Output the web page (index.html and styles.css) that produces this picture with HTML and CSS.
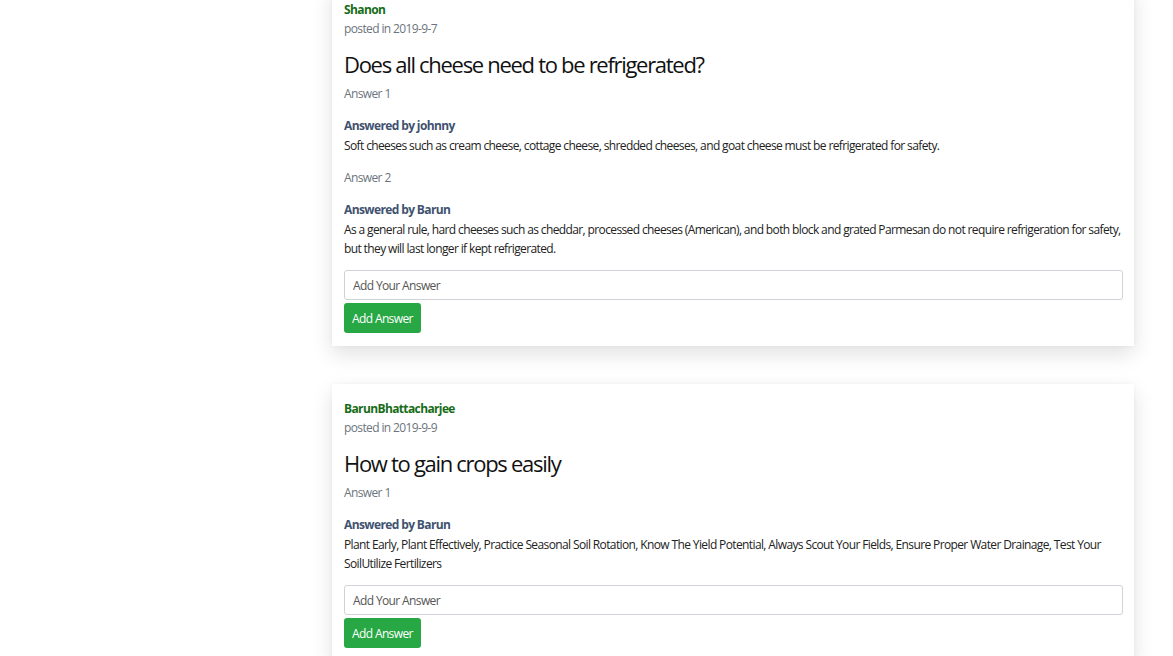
FILE: index.html
```html
<!DOCTYPE html>
<html>
<head>
<meta charset="utf-8">
<link rel="stylesheet" href="styles.css">
</head>
<body>
<main class="page">
  <div class="feed">
    <article class="card">
      <div class="author">Shanon</div>
      <div class="date">posted in 2019-9-7</div>
      <h2 class="question">Does all cheese need to be refrigerated?</h2>
      <div class="answer-label">Answer 1</div>
      <div class="answer">
        <div class="answered-by">Answered by johnny</div>
        <p class="answer-text">Soft cheeses such as cream cheese, cottage cheese, shredded cheeses, and goat cheese must be refrigerated for safety.</p>
      </div>
      <div class="answer-label">Answer 2</div>
      <div class="answer">
        <div class="answered-by">Answered by Barun</div>
        <p class="answer-text">As a general rule, hard cheeses such as cheddar, processed cheeses (American), and both block and grated Parmesan do not require refrigeration for safety, but they will last longer if kept refrigerated.</p>
      </div>
      <form class="answer-form">
        <input class="answer-input" type="text" placeholder="Add Your Answer">
        <button class="btn" type="button">Add Answer</button>
      </form>
    </article>
    <article class="card">
      <div class="author">BarunBhattacharjee</div>
      <div class="date">posted in 2019-9-9</div>
      <h2 class="question">How to gain crops easily</h2>
      <div class="answer-label">Answer 1</div>
      <div class="answer">
        <div class="answered-by">Answered by Barun</div>
        <p class="answer-text">Plant Early, Plant Effectively, Practice Seasonal Soil Rotation, Know The Yield Potential, Always Scout Your Fields, Ensure Proper Water Drainage, Test Your SoilUtilize Fertilizers</p>
      </div>
      <form class="answer-form">
        <input class="answer-input" type="text" placeholder="Add Your Answer">
        <button class="btn" type="button">Add Answer</button>
      </form>
    </article>
  </div>
</main>
</body>
</html>
```
FILE: styles.css
```css
html, body {
  margin: 0;
  padding: 0;
  background: #fff;
  overflow: hidden;
}
body {
  font-family: "Open Sans", "Liberation Sans", sans-serif;
  font-size: 12px;
  color: #212529;
}
.page {
  padding-left: 332px;
}
.feed {
  width: 802px;
  margin-top: -15px;
  display: flex;
  flex-direction: column;
  gap: 38px;
}
.card {
  background: #fff;
  padding: 16px 11px 13px 12px;
  box-shadow: 0 8px 20px rgba(0,0,0,0.12), 0 0 4px rgba(0,0,0,0.04);
  letter-spacing: -0.62px;
}
.author {
  color: #176c17;
  font-weight: 700;
  line-height: 18px;
}
.date {
  color: #6c757d;
  line-height: 20px;
}
.question {
  margin: 11px 0 5px;
  font-size: 22px;
  font-weight: 400;
  line-height: 28px;
  color: #111;
  letter-spacing: -1.3px;
}
.answer-label {
  color: #6c757d;
  line-height: 18px;
  padding-top: 2px;
  margin-bottom: 14px;
}
.answer {
  margin-bottom: 12px;
}
.answered-by {
  color: #3f5270;
  font-weight: 700;
  line-height: 18px;
}
.answer-text {
  margin: 1px 0 0;
  line-height: 19px;
  color: #222;
}
.answer-form {
  display: flex;
  flex-direction: column;
  align-items: flex-start;
  gap: 3px;
  margin-top: 12px;
}
.answer-input {
  box-sizing: border-box;
  width: 100%;
  height: 30px;
  border: 1px solid #cfd3d7;
  border-radius: 3px;
  padding: 0 8px;
  font-family: inherit;
  font-size: 12px;
  letter-spacing: -0.62px;
  color: #495057;
}
.answer-input::placeholder {
  color: #555;
}
.btn {
  height: 30px;
  padding: 0 8px;
  border: 0;
  border-radius: 3px;
  background: #28a745;
  color: #fff;
  font-family: inherit;
  font-size: 12px;
  letter-spacing: -0.62px;
}
```
